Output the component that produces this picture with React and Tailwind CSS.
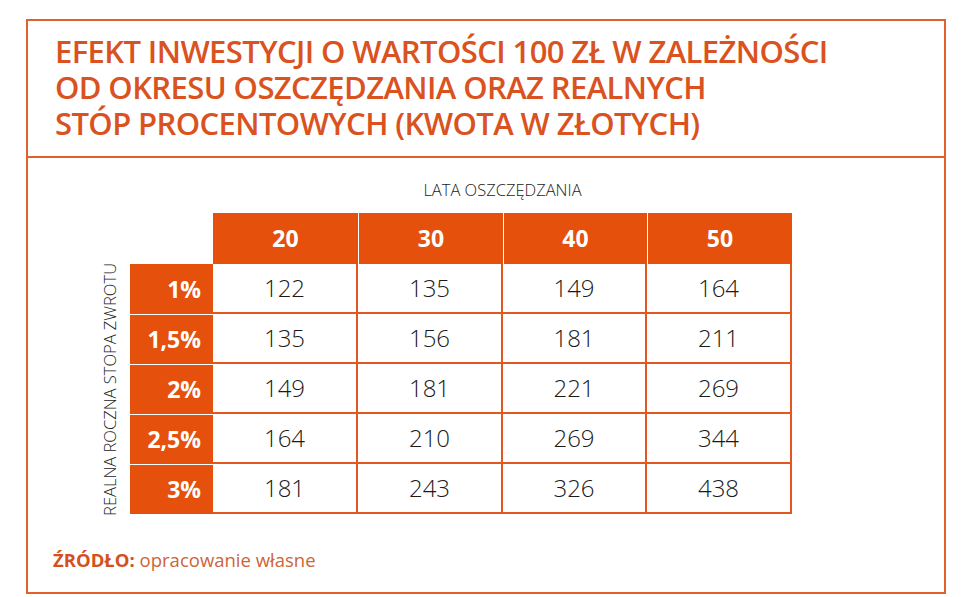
import React from "react";

const cols = ["20", "30", "40", "50"];
const rows = [
  ["1%", ["122", "135", "149", "164"]],
  ["1,5%", ["135", "156", "181", "211"]],
  ["2%", ["149", "181", "221", "269"]],
  ["2,5%", ["164", "210", "269", "344"]],
  ["3%", ["181", "243", "326", "438"]],
];
const widths = ["w-[145px]", "w-[145px]", "w-[144px]", "w-[145px]"];

export default function App() {
  return (
    <div className="w-[971px] h-[597px] bg-white overflow-hidden pt-[19px] pl-[26px] font-['Open_Sans',sans-serif]">
      <div className="w-[920px] h-[575px] border-2 border-[#e0612c] flex flex-col">
        <div className="h-[137px] border-b-2 border-[#e0612c] pl-[27px] pt-[12px]">
          <h1 className="text-[#da5220] text-[31px] leading-[36px] font-semibold tracking-[-0.6px] font-['Open_Sans',sans-serif]">
            EFEKT INWESTYCJI O WARTOŚCI 100 ZŁ W ZALEŻNOŚCI
            <br />
            OD OKRESU OSZCZĘDZANIA ORAZ REALNYCH
            <br />
            STÓP PROCENTOWYCH (KWOTA W ZŁOTYCH)
          </h1>
        </div>
        <div className="flex-1 flex flex-col pt-[22px]">
          <div className="flex">
            <div className="w-[74px]" />
            <div className="w-[16px] flex flex-col justify-end">
              <div className="h-[250px] flex items-center justify-center">
                <span className="[writing-mode:vertical-rl] rotate-180 text-[16.5px] leading-[16px] font-light text-[#222] whitespace-nowrap">
                  REALNA ROCZNA STOPA ZWROTU
                </span>
              </div>
            </div>
            <div className="w-[12px]" />
            <div className="flex flex-col">
              <div className="flex">
                <div className="w-[83px]" />
                <div className="w-[579px] text-center text-[16.5px] leading-[20px] font-light text-[#222]">
                  LATA OSZCZĘDZANIA
                </div>
              </div>
              <div className="h-[13px]" />
              <div className="flex h-[51px]">
                <div className="w-[83px]" />
                {cols.map((c, i) => (
                  <div
                    key={c}
                    className={`${widths[i]} bg-[#e5500c] flex items-center justify-center text-white font-bold text-[23px] ${i > 0 ? "border-l border-white" : ""}`}
                  >
                    {c}
                  </div>
                ))}
              </div>
              {rows.map(([label, vals], r) => (
                <div key={label} className="flex h-[50px]">
                  <div
                    className={`w-[83px] bg-[#e5500c] flex items-center justify-end pr-[12px] text-white font-bold text-[23px] ${r > 0 ? "border-t border-white" : ""}`}
                  >
                    {label}
                  </div>
                  {vals.map((v, i) => (
                    <div
                      key={i}
                      className={`${widths[i]} border-r-2 border-b-2 border-[#e2571d] flex items-center justify-center text-[24px] font-light text-[#1a1a1a]`}
                    >
                      {v}
                    </div>
                  ))}
                </div>
              ))}
            </div>
          </div>
          <div className="pl-[25px] pt-[34px] text-[18.5px] leading-[24px]">
            <span className="font-bold text-[#d4511d]">ŹRÓDŁO:</span>{" "}
            <span className="text-[#cd6535]">opracowanie własne</span>
          </div>
        </div>
      </div>
    </div>
  );
}
